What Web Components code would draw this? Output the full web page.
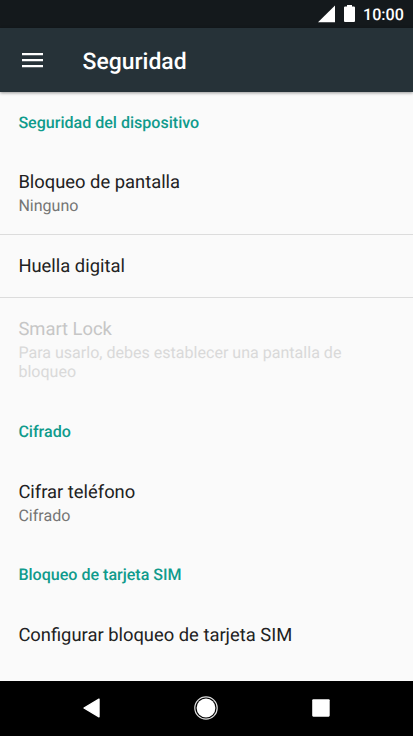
<!DOCTYPE html>
<html lang="es">
<head>
<meta charset="utf-8">
<title>Seguridad</title>
<style>
html,body{margin:0;height:100%;overflow:hidden;background:#fafafa}
body{font-family:Roboto,"Liberation Sans",sans-serif;text-rendering:geometricPrecision}
</style>
</head>
<body>
<phone-screen>
  <status-bar slot="status">10:00</status-bar>
  <app-bar slot="bar">Seguridad</app-bar>
  <pref-category>Seguridad del dispositivo</pref-category>
  <pref-item divider first>Bloqueo de pantalla<span slot="summary">Ninguno</span></pref-item>
  <pref-item divider>Huella digital</pref-item>
  <pref-item disabled>Smart Lock<span slot="summary">Para usarlo, debes establecer una pantalla de bloqueo</span></pref-item>
  <pref-category>Cifrado</pref-category>
  <pref-item>Cifrar teléfono<span slot="summary">Cifrado</span></pref-item>
  <pref-category>Bloqueo de tarjeta SIM</pref-category>
  <pref-item>Configurar bloqueo de tarjeta SIM</pref-item>
  <nav-bar slot="nav"></nav-bar>
</phone-screen>
<script>
function define(name, html) {
  customElements.define(name, class extends HTMLElement {
    constructor() {
      super();
      this.attachShadow({mode: 'open'}).innerHTML = html;
    }
  });
}

define('phone-screen', `<style>
:host{display:flex;flex-direction:column;width:413px;height:736px;background:#fafafa}
main{flex:1;min-height:0;overflow:hidden}
</style><slot name="status"></slot><slot name="bar"></slot><main><slot></slot></main><slot name="nav"></slot>`);

define('status-bar', `<style>
:host{display:flex;align-items:center;height:28px;box-sizing:border-box;padding:0 9px 0 318px;background:#14191c;color:#fff;font-size:16.1px;font-weight:500;line-height:28px;white-space:nowrap}
svg{display:block;flex:none}
.battery{margin:0 8px 0 9px}
.time{padding-top:1px}
</style>
<svg width="17" height="28" viewBox="0 0 17 28"><path d="M0 22.2 17 5.4V22.2Z" fill="#fff"/></svg>
<svg class="battery" width="11" height="28" viewBox="0 0 11 28"><path d="M0 7.6Q0 6.5 1.1 6.5H3V5H8V6.5H9.9Q11 6.5 11 7.6V21Q11 22 10 22H1Q0 22 0 21Z" fill="#fff"/></svg>
<span class="time"><slot></slot></span>`);

define('app-bar', `<style>
:host{display:flex;align-items:center;height:64px;box-sizing:border-box;padding:2px 0 0 22px;background:#263238;color:#fff;font-size:22.95px;font-weight:500;box-shadow:0 1px 3px rgba(0,0,0,.4);position:relative}
svg{display:block;margin:0 39.5px 2px 0}
</style>
<svg width="21" height="15" viewBox="0 0 21 15" fill="#fff"><path d="M0 0H21V2.3H0ZM0 6H21V8.3H0ZM0 12H21V14.3H0Z"/></svg>
<span><slot></slot></span>`);

define('pref-category', `<style>
:host{display:flex;align-items:center;height:60px;box-sizing:border-box;padding:2px 0 0 18.4px;color:#109b8c;font-size:16.06px;font-weight:500;line-height:20px}
</style><span><slot></slot></span>`);

define('pref-item', `<style>
:host{display:block;padding:20px 60px 18px 18.4px;color:#212121;border-bottom:1px solid transparent}
:host([first]){padding-top:19px;padding-bottom:19px}
:host([divider]){border-color:#dcdcdc}
:host([disabled]){padding-bottom:19px}
.title{font-size:18.36px;line-height:24px}
.summary{font-size:16.06px;line-height:19px;color:#757575}
::slotted([slot=summary]){display:block;padding-top:1px}
:host([disabled]) .title{color:#c6c6c6}
:host([disabled]) .summary{color:#d9d9d9}
</style><div class="title"><slot></slot></div><div class="summary"><slot name="summary"></slot></div>`);

define('nav-bar', `<style>
:host{display:flex;align-items:center;justify-content:space-between;height:55px;box-sizing:border-box;padding:0 83px 1px;background:#000}
svg{display:block}
</style>
<svg width="17" height="20" viewBox="0 0 17 20"><path d="M1 10 16 1.2V18.8Z" fill="#fff" stroke="#fff" stroke-width="1.4" stroke-linejoin="round"/></svg>
<svg width="24" height="24" viewBox="0 0 24 24"><circle cx="12" cy="12" r="11.2" fill="none" stroke="#ddd" stroke-width="1.2"/><circle cx="12" cy="12" r="9.4" fill="#fff"/></svg>
<svg width="18" height="18" viewBox="0 0 18 18"><rect width="17.5" height="17.5" x=".2" y=".2" rx="1.1" fill="#fff"/></svg>`);
</script>
</body>
</html>
